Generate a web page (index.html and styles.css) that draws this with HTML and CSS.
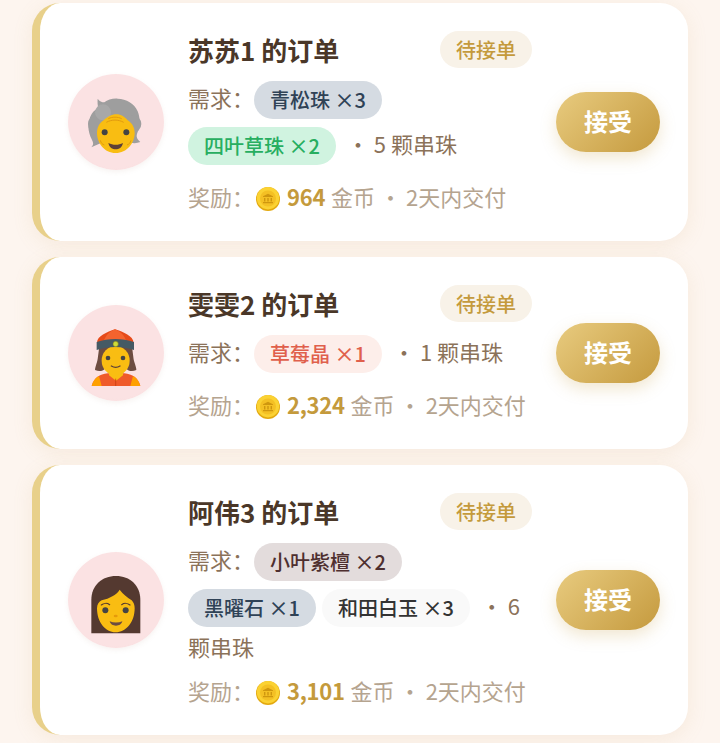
FILE: index.html
```html
<!DOCTYPE html>
<html lang="zh-CN">
<head>
<meta charset="utf-8">
<title>订单</title>
<link rel="stylesheet" href="styles.css">
</head>
<body>
<svg class="defs" width="0" height="0" aria-hidden="true">
  <symbol id="coin" viewBox="0 0 24 24">
    <circle cx="12" cy="12" r="12" fill="#e3a90f"/>
    <circle cx="12" cy="11.2" r="11.2" fill="#fbd233"/>
    <circle cx="12" cy="11.5" r="8" fill="#f4c024"/>
    <path d="M7 9.2 12 6.8l5 2.4v.9H7zM8 11h1.4v3.4H8zM11.3 11h1.4v3.4h-1.4zM14.6 11H16v3.4h-1.4zM7 15h10v1.2H7z" fill="#cf970f"/>
  </symbol>
</svg>
<main class="list">

  <article class="card">
    <div class="avatar">
      <svg class="face" viewBox="25 15 288 288">
        <path d="M95 235c8-8 6-14 1-24-12-24-14-52 0-76 6-10 14-14 20-18-2-8-3-18-2-28 6 8 12 11 20 11 10-8 24-12 40-11 26 1 50 14 60 38 8 20 8 44 0 62-4 10-6 18 8 30-14 6-30 4-42-4H135c-12 10-26 12-40 20z" fill="#9e9e9e"/>
        <circle cx="113" cy="165" r="28" fill="#9e9e9e"/>
        <circle cx="218" cy="165" r="27" fill="#9e9e9e"/>
        <circle cx="130" cy="130" r="24" fill="#a8a8a8"/>
        <path d="M112 192c0-18 8-30 20-38 10-10 24-18 38-18 14 0 26 8 34 18 12 8 21 20 21 38 0 30-23 60-57 60s-56-30-56-60z" fill="#f9bd12"/>
        <path d="M140 160c16-9 36-9 52 0M146 149c12-6 28-6 40 0" fill="none" stroke="#e09a10" stroke-width="3"/>
        <circle cx="135" cy="190" r="9" fill="#444"/>
        <circle cx="200" cy="190" r="9" fill="#444"/>
        <path d="M146 222c14 7 30 7 44 0-3 14-12 19-22 19s-19-5-22-19z" fill="#5d4037"/>
        <path d="M122 214c2 8 6 12 12 14M214 214c-2 8-6 12-12 14" fill="none" stroke="#e09a10" stroke-width="3"/>
      </svg>
    </div>
    <div class="body">
      <div class="head">
        <h2 class="title">苏苏1 的订单</h2>
        <span class="tag">待接单</span>
      </div>
      <div class="needs"><span>需求：</span><span class="pill slate">青松珠 ×3</span><span class="pill green">四叶草珠 ×2</span><span class="sep">·</span> <span>5</span> <span>颗串珠</span></div>
      <div class="reward"><span>奖励：</span><svg class="coin"><use href="#coin"/></svg><b class="amount">964</b><span class="unit">金币</span><span class="dot">·</span><span>2天内交付</span></div>
    </div>
    <button class="accept">接受</button>
  </article>

  <article class="card">
    <div class="avatar">
      <svg class="face" viewBox="25 15 288 288">
        <path d="M122 128h92c6 22 6 44 10 58 3 10 6 18 6 24-14 6-24 2-30-4H136c-6 6-16 10-30 4 0-6 3-14 6-24 4-14 4-36 10-58z" fill="#6d4c41"/>
        <path d="M96 258c6-24 24-36 48-38h50c24 2 42 14 48 38z" fill="#ef5a2a"/>
        <path d="M96 258c4-14 10-24 22-30l8 30zM242 258c-4-14-10-24-22-30l-8 30z" fill="#ffa000"/>
        <path d="M148 212h42v14l-21 16-21-16z" fill="#f9bd12"/>
        <path d="M168 236v22" stroke="#bf360c" stroke-width="2"/>
        <ellipse cx="168" cy="182" rx="42" ry="44" fill="#f9bd12"/>
        <path d="M112 128c0-20 30-32 54-40 26 8 54 20 56 40z" fill="#e64a19"/>
        <path d="M166 88c-18 8-30 20-34 38h68c-4-18-16-30-34-38z" fill="#f4632e"/>
        <path d="M111 126c36-12 76-12 112 0v24c-36-12-76-12-112 0z" fill="#455a64"/>
        <circle cx="168" cy="132" r="8" fill="#cddc39" stroke="#827717" stroke-width="1.5"/>
        <circle cx="145" cy="174" r="7" fill="#444"/>
        <circle cx="190" cy="174" r="7" fill="#444"/>
        <path d="M155 198c8 5 18 5 26 0" fill="none" stroke="#5d4037" stroke-width="4" stroke-linecap="round"/>
      </svg>
    </div>
    <div class="body">
      <div class="head">
        <h2 class="title">雯雯2 的订单</h2>
        <span class="tag">待接单</span>
      </div>
      <div class="needs"><span>需求：</span><span class="pill red">草莓晶 ×1</span><span class="sep">·</span> <span>1</span> <span>颗串珠</span></div>
      <div class="reward"><span>奖励：</span><svg class="coin"><use href="#coin"/></svg><b class="amount">2,324</b><span class="unit">金币</span><span class="dot">·</span><span>2天内交付</span></div>
    </div>
    <button class="accept">接受</button>
  </article>

  <article class="card">
    <div class="avatar">
      <svg class="face" viewBox="25 21 288 288">
        <path d="M95 265V165c0-44 32-72 74-72s73 28 73 72v100z" fill="#543930"/>
        <path d="M112 190c0-12 6-20 14-24 24-6 44-16 54-32 10 14 24 24 36 32 6 6 9 14 9 24 0 42-26 72-57 72s-56-30-56-72z" fill="#f9bd12"/>
        <circle cx="137" cy="196" r="9" fill="#444"/>
        <circle cx="198" cy="196" r="9" fill="#444"/>
        <path d="M125 180c7-6 18-6 25-1M186 179c7-5 18-5 25 1" fill="none" stroke="#543930" stroke-width="3.5" stroke-linecap="round"/>
        <ellipse cx="168" cy="213" rx="6" ry="4" fill="#e59a0a"/>
        <path d="M150 229c12 5 26 5 38 0-3 10-10 13-19 13s-16-3-19-13z" fill="#6d4c41"/>
      </svg>
    </div>
    <div class="body">
      <div class="head">
        <h2 class="title">阿伟3 的订单</h2>
        <span class="tag">待接单</span>
      </div>
      <div class="needs"><span>需求：</span><span class="pill plum">小叶紫檀 ×2</span><span class="pill slate">黑曜石 ×1</span><span class="pill white">和田白玉 ×3</span><span class="sep">·</span> <span>6</span> <span>颗串珠</span></div>
      <div class="reward"><span>奖励：</span><svg class="coin"><use href="#coin"/></svg><b class="amount">3,101</b><span class="unit">金币</span><span class="dot">·</span><span>2天内交付</span></div>
    </div>
    <button class="accept">接受</button>
  </article>

</main>
</body>
</html>
```

FILE: styles.css
```css
* { box-sizing: border-box; }
html, body { margin: 0; padding: 0; }
body {
  width: 720px;
  height: 743px;
  overflow: hidden;
  background: #fdf5ef;
  font-family: "Noto Sans CJK SC", "Noto Sans", sans-serif;
}
.defs { position: absolute; }
.list {
  display: flex;
  flex-direction: column;
  gap: 16px;
  padding: 3px 32px 0;
}
.card {
  display: flex;
  align-items: center;
  gap: 24px;
  padding: 28px 28px;
  background: #fff;
  border-left: 8px solid #e8d08a;
  border-radius: 28px;
  box-shadow: 0 4px 20px rgba(200, 165, 100, .13);
}
.avatar {
  flex: none;
  display: flex;
  align-items: center;
  justify-content: center;
  width: 96px;
  height: 96px;
  border-radius: 50%;
  background: radial-gradient(circle at 50% 45%, #fbe2e3 70%, #f5dbdb 100%);
  box-shadow: 0 2px 5px rgba(180, 140, 120, .1);
  overflow: hidden;
}
.face { display: block; width: 96px; height: 96px; }
.body { flex: 1; min-width: 0; }
.head {
  display: flex;
  align-items: center;
  justify-content: space-between;
  height: 37px;
  margin-bottom: 8px;
}
.title {
  margin: 0;
  font-size: 26px;
  font-weight: 700;
  line-height: 37px;
  color: #4a3728;
}
.tag {
  height: 37px;
  padding: 0 16px;
  border-radius: 19px;
  background: #f8f2e8;
  color: #c49a3c;
  font-size: 20px;
  font-weight: 500;
  line-height: 37px;
}
.needs {
  font-size: 22px;
  line-height: 32px;
  color: #8b7259;
}
.pill {
  display: inline-block;
  height: 38px;
  margin: 5px 6px 3px 0;
  padding: 0 16px;
  border-radius: 19px;
  font-size: 20px;
  font-weight: 500;
  line-height: 38px;
  vertical-align: -1px;
}
.slate { background: #d5dbe2; color: #2f4256; }
.green { background: #d0f3e0; color: #27ae60; }
.red { background: #fdeeea; color: #e0604c; }
.plum { background: #e3dcdc; color: #4e2f2f; }
.white { background: #f9f9f9; color: #333; }
.sep { margin-left: 5px; }
.reward {
  display: flex;
  align-items: center;
  height: 30px;
  margin: 13px 0 2px;
  font-size: 22px;
  color: #b5a48f;
  white-space: nowrap;
}
.coin { flex: none; width: 24px; height: 24px; margin: 6px 7px 0 2px; }
.amount { color: #c49a3c; font-weight: 700; letter-spacing: -.3px; }
.unit { margin-left: 6px; }
.dot { margin: 0 4.5px; }
.accept {
  flex: none;
  width: 104px;
  height: 60px;
  padding: 0 0 4px;
  border: 0;
  border-radius: 30px;
  background: linear-gradient(135deg, #e8cb7f, #c59a3e);
  color: #fff;
  font: 700 24px "Noto Sans CJK SC", sans-serif;
  box-shadow: 0 6px 16px rgba(200, 160, 70, .25);
}
```
